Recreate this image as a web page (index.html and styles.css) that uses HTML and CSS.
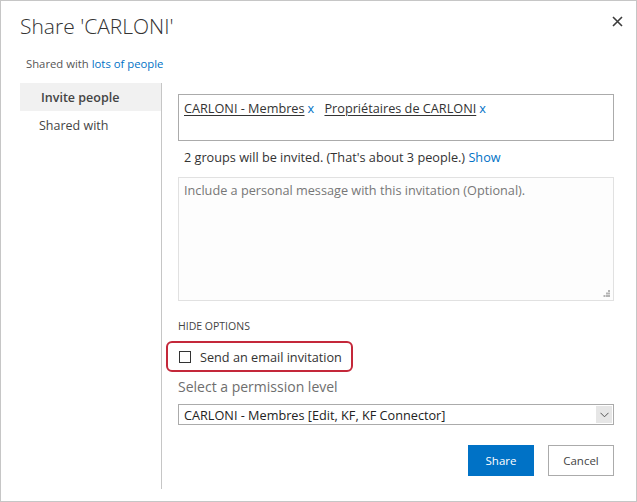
FILE: index.html
```html
<!DOCTYPE html>
<html>
<head>
<meta charset="utf-8">
<title>Share</title>
<link rel="stylesheet" href="styles.css">
</head>
<body>
<div class="dialog">
  <div class="header">
    <h1 class="title">Share 'CARLONI'</h1>
    <button class="close" aria-label="Close">
      <svg width="11" height="11" viewBox="0 0 11 11"><path d="M1 1 L10 10 M10 1 L1 10" stroke="#3c3c3c" stroke-width="1.6" fill="none"/></svg>
    </button>
  </div>
  <div class="shared-line">Shared with <a class="link" href="#">lots of people</a></div>
  <div class="body">
    <nav class="nav">
      <div class="nav-item active">Invite people</div>
      <div class="nav-item">Shared with</div>
    </nav>
    <div class="main">
      <div class="people-box">
        <span class="entity">CARLONI - Membres</span><span class="remove">x</span>
        <span class="entity second">Propriétaires de CARLONI</span><span class="remove">x</span>
      </div>
      <div class="summary">2 groups will be invited. (That's about 3 people.) <a class="link" href="#">Show</a></div>
      <div class="message">
        <span class="placeholder">Include a personal message with this invitation (Optional).</span>
        <svg class="grip" width="7" height="7" viewBox="0 0 7 7"><rect x="5" y="0" width="2" height="2" fill="#b4b4b4"/><rect x="3" y="2.5" width="2" height="2" fill="#b4b4b4"/><rect x="5" y="2.5" width="2" height="2" fill="#b4b4b4"/><rect x="0.5" y="5" width="2" height="2" fill="#b4b4b4"/><rect x="3" y="5" width="2" height="2" fill="#b4b4b4"/><rect x="5" y="5" width="2" height="2" fill="#b4b4b4"/></svg>
      </div>
      <div class="hide-options">HIDE OPTIONS</div>
      <div class="email-option">
        <span class="checkbox"></span>
        <span class="email-label">Send an email invitation</span>
      </div>
      <div class="perm-label">Select a permission level</div>
      <div class="select">
        <span class="select-text">CARLONI - Membres [Edit, KF, KF Connector]</span>
        <span class="select-btn"><svg width="9" height="6" viewBox="0 0 9 6"><path d="M0.5 0.8 L4.5 4.8 L8.5 0.8" stroke="#555" stroke-width="1" fill="none"/></svg></span>
      </div>
      <div class="actions">
        <button class="btn primary">Share</button>
        <button class="btn">Cancel</button>
      </div>
    </div>
  </div>
</div>
</body>
</html>
```

FILE: styles.css
```css
html, body {
  margin: 0;
  padding: 0;
  background: #ffffff;
}
body {
  font-family: "Open Sans", "Noto Sans", sans-serif;
  color: #333;
}
.dialog {
  width: 637px;
  height: 502px;
  box-sizing: border-box;
  border: 1px solid #c6c6c6;
  display: flex;
  flex-direction: column;
}
.header {
  display: flex;
  justify-content: space-between;
  align-items: flex-start;
  height: 42px;
}
.title {
  margin: 11px 0 0 19px;
  font-size: 21px;
  font-weight: 300;
  line-height: 28px;
  color: #333;
}
.close {
  margin: 15px 13px 0 0;
  padding: 0;
  border: 0;
  background: none;
  width: 11px;
  height: 11px;
  display: flex;
}
.shared-line {
  margin: 13px 0 0 25px;
  font-size: 11.3px;
  line-height: 16px;
  color: #555;
  height: 16px;
}
.link {
  color: #0072c6;
  text-decoration: none;
}
.body {
  margin-top: 11px;
  display: flex;
  height: 406px;
}
.nav {
  width: 141px;
  margin-left: 19px;
  display: flex;
  flex-direction: column;
}
.nav-item {
  height: 28px;
  box-sizing: border-box;
  padding-top: 2px;
  line-height: 26px;
  font-size: 12.5px;
  color: #444;
  padding-left: 19px;
}
.nav-item.active {
  background: #f1f1f1;
  font-weight: 600;
  padding-left: 21px;
}
.main {
  border-left: 1px solid #c6c6c6;
  padding: 11px 0 0 16px;
  width: 436px;
  display: flex;
  flex-direction: column;
}
.people-box {
  height: 47px;
  box-sizing: border-box;
  border: 1px solid #ababab;
  padding: 3px 5px 0;
  font-size: 12.7px;
  line-height: 20px;
  color: #333;
}
.entity {
  text-decoration: underline;
  text-underline-offset: 2px;
  color: #333;
}
.entity.second {
  margin-left: 7px;
}
.remove {
  color: #0072c6;
  margin-left: 3px;
}
.summary {
  margin-top: 8px;
  padding-left: 6px;
  font-size: 12.7px;
  line-height: 16px;
  color: #333;
}
.message {
  position: relative;
  margin-top: 12px;
  height: 124px;
  box-sizing: border-box;
  border: 1px solid #e1e1e1;
  background: #fdfdfd;
  padding: 0 5px;
}
.placeholder {
  font-size: 12.7px;
  line-height: 20px;
  color: #777;
}
.grip {
  position: absolute;
  right: 3px;
  bottom: 3px;
}
.hide-options {
  margin-top: 17px;
  font-size: 10.5px;
  line-height: 16px;
  color: #444;
}
.email-option {
  margin: 7px 0 0 -12px;
  width: 187px;
  height: 31px;
  box-sizing: border-box;
  border: 2px solid #c4283a;
  border-radius: 6px;
  display: flex;
  align-items: center;
  padding-left: 11px;
}
.checkbox {
  width: 12px;
  height: 12px;
  box-sizing: border-box;
  border: 1px solid #333;
  background: #fff;
}
.email-label {
  margin-left: 9px;
  font-size: 12.7px;
  color: #333;
}
.perm-label {
  margin-top: 6px;
  font-size: 14px;
  line-height: 18px;
  color: #6e6e6e;
}
.select {
  margin-top: 8px;
  height: 21px;
  box-sizing: border-box;
  border: 1px solid #ababab;
  display: flex;
  align-items: center;
  justify-content: space-between;
}
.select-text {
  padding-left: 5px;
  font-size: 12.7px;
  color: #222;
}
.select-btn {
  width: 16px;
  height: 17px;
  margin-right: 1px;
  background: #e6e6e6;
  display: flex;
  align-items: center;
  justify-content: center;
}
.actions {
  margin-top: 20px;
  display: flex;
  justify-content: flex-end;
  gap: 14px;
}
.btn {
  width: 66px;
  height: 31px;
  box-sizing: border-box;
  border: 1px solid #ababab;
  background: #fff;
  color: #444;
  font-family: "Open Sans", "Noto Sans", sans-serif;
  font-size: 11.5px;
  padding: 0;
}
.btn.primary {
  background: #0072c6;
  border-color: #0072c6;
  color: #fff;
}
```
